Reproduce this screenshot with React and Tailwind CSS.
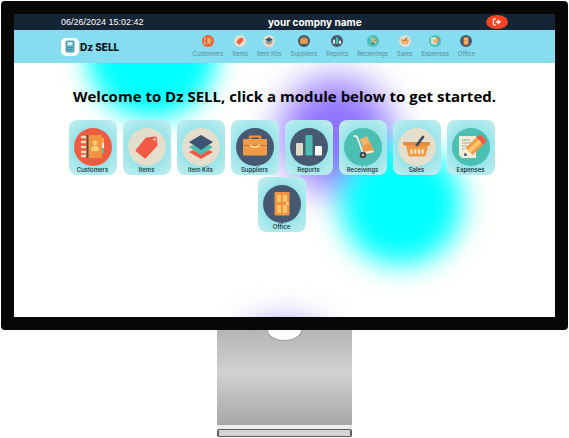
import React from "react";

const art = {
  Customers: (
    <>
      <circle cx="19" cy="19" r="19" fill="#f15b40" />
      <path d="M8 9h6M8 14h6M8 19h6M8 24h6M8 28h6" stroke="#f6dcb8" strokeWidth="2.400" strokeLinecap="round" />
      <path d="M27 10h3v5h-3z" fill="#f2b04a" />
      <path d="M27 15h3v5h-3z" fill="#e8f0ea" />
      <path d="M27 20h3v5h-3z" fill="#4cc0b4" />
      <rect x="12" y="7" width="16" height="23" rx="1" fill="#ef9440" />
      <rect x="12.500" y="7" width="2" height="23" fill="#5a4a52" />
      <circle cx="21" cy="15" r="2.400" fill="#fbcf78" />
      <path d="M17 23v-2q0-3 4-3t4 3v2z" fill="#fbcf78" />
    </>
  ),
  Items: (
    <>
      <circle cx="19" cy="19" r="19" fill="#e3dfcc" />
      <path d="M18 9.500 27 8.500q2 0 2 2l.6 7L18 30q-1 1-2 0l-8-6.500q-1-1 0-2z" fill="#f15b45" />
      <circle cx="26.600" cy="11.400" r="1.200" fill="#f5e6d3" />
    </>
  ),
  "Item Kits": (
    <>
      <circle cx="19" cy="19" r="19" fill="#e3dfcc" />
      <path d="m7 24 4-2 8 4 8-4 4 2-12 7z" fill="#f15b45" />
      <path d="m7 19 4-2 8 4 8-4 4 2-12 8z" fill="#4cbfb3" />
      <path d="m19 7 12 7-12 8L7 14z" fill="#3f5372" />
    </>
  ),
  Suppliers: (
    <>
      <circle cx="19" cy="19" r="19" fill="#465872" />
      <path d="M14 12V8.500h10V12" fill="none" stroke="#ef9440" strokeWidth="2.200" strokeLinejoin="round" />
      <rect x="7" y="11" width="24" height="16.500" rx="1" fill="#f39a47" />
      <path d="M7 17.500h24" stroke="#c97434" strokeWidth="1" />
      <path d="M14.500 16.500q0 2.500 4.500 2.500t4.500-2.500" fill="none" stroke="#fde0a0" strokeWidth="1.600" />
    </>
  ),
  Reports: (
    <>
      <circle cx="19" cy="19" r="19" fill="#465872" />
      <rect x="6" y="15" width="7" height="12.500" rx="1" fill="#e0dccb" />
      <rect x="15.500" y="7" width="7" height="20.500" rx="1" fill="#4cbfb3" />
      <rect x="25" y="18" width="7" height="9.500" rx="1" fill="#fff" />
    </>
  ),
  Receivings: (
    <>
      <circle cx="19" cy="19" r="19" fill="#4cbfb3" />
      <path d="m16 11 7-3 3 7-7 3.500z" fill="#f5b469" />
      <path d="m18 18 8-3.500 4 9-9 3.500z" fill="#f39a47" />
      <path d="M10.500 8q2.500 0 3 2L19 25l10-1.500" fill="none" stroke="#f4f1e6" strokeWidth="1.800" strokeLinecap="round" strokeLinejoin="round" />
      <circle cx="19" cy="27" r="3.300" fill="#3f4a5c" />
      <circle cx="19" cy="27" r="1.200" fill="#e8b878" />
    </>
  ),
  Sales: (
    <>
      <circle cx="19" cy="19" r="19" fill="#e3dfcc" />
      <path d="M7.500 16h23L27.500 28.500h-17z" fill="#f39a47" />
      <rect x="5" y="14" width="27" height="3.500" rx="1" fill="#e98a3d" />
      <path d="M13.500 22v3M17.200 22v3M21 22v3M24.700 22v3" stroke="#fbe8c8" strokeWidth="2.200" strokeLinecap="round" />
      <path d="m25 9-6 8" stroke="#3f4a5c" strokeWidth="2.800" strokeLinecap="round" />
    </>
  ),
  Expenses: (
    <>
      <circle cx="19" cy="19" r="19" fill="#4cbfb3" />
      <path d="M7 8h17v22H10l-3-3z" fill="#efebd9" />
      <path d="M10 12h8M10 15h9M10 18h6M10 21h3" stroke="#a9ada0" strokeWidth="1" />
      <path d="m12 28 1.500-8 7 7z" fill="#fff3df" />
      <path d="m12 28 .7-3.500 3 2.700z" fill="#3f4a5c" />
      <path d="M13.500 20 25 9l7 7-11.500 11z" fill="#f39a47" />
      <path d="m15.500 22 11.500-11 3 3-11.500 11z" fill="#fbc56c" />
      <path d="m24.500 9.500 2.500-2q1.500-1 2.700 0l4 4q1 1.200 0 2.500l-2 2.500z" fill="#f15b45" />
    </>
  ),
  Office: (
    <>
      <circle cx="19" cy="19" r="19" fill="#465872" />
      <rect x="11.500" y="7" width="15" height="23.500" rx="1" fill="#ef9440" />
      <path d="M14 10h4v7h-4zM20 10h4v7h-4zM14 20h4v8h-4zM20 20h4v8h-4z" fill="#fbc56c" />
      <circle cx="24.500" cy="18.500" r="1.200" fill="#fde7b5" />
    </>
  ),
};

const modules = Object.keys(art);

function ModuleIcon({ name, className }) {
  return (
    <svg viewBox="0 0 38 38" className={className} aria-hidden="true">
      {art[name]}
    </svg>
  );
}

function TopBar() {
  return (
    <div className="flex h-4 items-center justify-between bg-[#142635] px-[47px] text-white">
      <time className="font-['Liberation_Sans',sans-serif] text-[9px] leading-none">06/26/2024 15:02:42</time>
      <span className="text-[10px] leading-none font-bold">your compny name</span>
      <button aria-label="Log out" className="flex h-3.5 w-[22px] items-center justify-center rounded-[50%] bg-[#fa4322]">
        <svg viewBox="0 0 12 10" className="h-2 w-2.5" aria-hidden="true">
          <path d="M4.500 1H3Q1.500 1 1.500 2.500v5Q1.500 9 3 9h1.500" fill="none" stroke="#fff" strokeWidth="1.500" />
          <path d="M4.500 4H7V1.500L11 5 7 8.500V6H4.500z" fill="#fff" />
        </svg>
      </button>
    </div>
  );
}

function NavBar() {
  return (
    <header className="flex h-[33px] items-center justify-between bg-[#86ddf0] pr-20 pl-[47px]">
      <a href="#home" className="flex items-center gap-px">
        <span className="flex size-[18px] items-center justify-center rounded-[5px] bg-white">
          <svg viewBox="0 0 10 13" className="h-[13px] w-2.5" aria-hidden="true">
            <rect x="1" y="1" width="8" height="11" rx="1" fill="#63b4cc" stroke="#35788f" strokeWidth=".8" />
            <rect x="2.500" y="2.200" width="5" height="3" fill="#d5f3f8" />
            <path d="M2.500 7.500h5M2.500 9.500h5" stroke="#35677a" strokeWidth="1" strokeDasharray="1 .8" />
          </svg>
        </span>
        <span className="text-[10px] leading-none font-extrabold text-[#08131a]">Dz SELL</span>
      </a>
      <nav className="flex gap-[9px]">
        {modules.map((name) => (
          <a key={name} href="#module" className="flex flex-col items-center gap-[3px] text-[6px] leading-[8px] whitespace-nowrap text-[#5c8894]">
            <ModuleIcon name={name} className="size-3" />
            {name}
          </a>
        ))}
      </nav>
    </header>
  );
}

function Blobs() {
  return (
    <div className="absolute inset-0 -z-10 overflow-hidden" aria-hidden="true">
      <div className="absolute top-[16px] left-[266px] size-[112px] rounded-full bg-[#8f73ff] blur-[18px]" />
      <div className="absolute top-[-74px] left-[73px] size-[130px] rounded-full bg-[#00ffff] blur-[13px]" />
      <div className="absolute top-[80px] left-[326px] size-[122px] rounded-full bg-[#00ffff] blur-[14px]" />
      <div className="absolute top-[262px] left-[215px] size-[112px] rounded-full bg-[#8f73ff] blur-[18px]" />
    </div>
  );
}

function Dashboard() {
  return (
    <main className="relative isolate flex-1 bg-[#fffffd] px-12 pt-[22px]">
      <Blobs />
      <h1 className="text-center font-['Open_Sans',sans-serif] text-[15px] leading-[22px] font-bold whitespace-nowrap text-black">
        Welcome to Dz SELL, click a module below to get started.
      </h1>
      <div className="mt-[13px] flex flex-wrap justify-center gap-x-1.5 gap-y-0.5 pr-1.5">
        {modules.map((name) => (
          <a
            key={name}
            href="#module"
            className="flex w-12 flex-col items-center rounded-lg bg-[radial-gradient(circle,#92e3e9_45%,#b8ecee_85%)] pt-2 pb-px text-[6px] leading-[8px] font-medium whitespace-nowrap text-[#10282e]"
          >
            <ModuleIcon name={name} className="size-[38px]" />
            {name}
          </a>
        ))}
      </div>
    </main>
  );
}

export default function App() {
  return (
    <div className="min-h-screen bg-white px-px pt-px font-['Inter',sans-serif]">
      <div className="rounded-[4px] bg-[#070707] p-[13px]">
        <div className="flex aspect-[541/303] flex-col overflow-hidden">
          <TopBar />
          <NavBar />
          <Dashboard />
        </div>
      </div>
      <div className="mx-auto w-[135px]">
        <div className="h-[95px] overflow-hidden bg-linear-to-b from-[#b4b5b7] via-[#d0d1d3] via-45% to-[#a6a7a9]">
          <div className="mx-auto h-[11px] w-[35px] rounded-[0_0_50%_50%/0_0_100%_100%] border-x border-b border-[#9c9d9f] bg-white" />
        </div>
        <div className="h-1 bg-[#ececee]" />
        <div className="h-2 rounded-[2px] border-x-2 border-y border-[#5c5c5e] bg-[#d3d3d5]" />
      </div>
    </div>
  );
}
